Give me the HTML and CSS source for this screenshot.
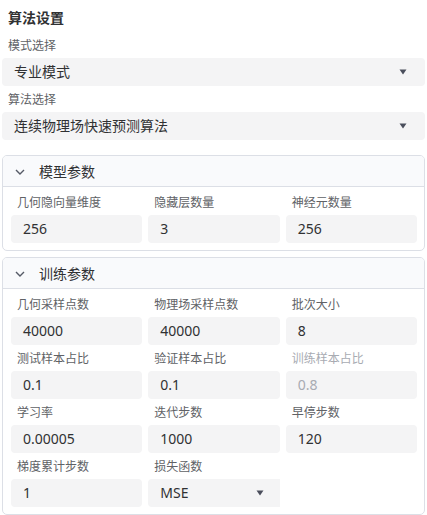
FILE: index.html
```html
<!DOCTYPE html>
<html lang="zh-CN">
<head>
<meta charset="utf-8">
<title>算法设置</title>
<link rel="stylesheet" href="styles.css">
</head>
<body>
<div class="settings">
  <div class="title">算法设置</div>

  <div class="stack">
    <div class="field">
      <div class="label">模式选择</div>
      <div class="select">
        <span>专业模式</span>
        <svg class="caret" width="8" height="6" viewBox="0 0 8 6"><path d="M0.5 0.5H7.5L4 5.5Z" fill="#4a4e5c"/></svg>
      </div>
    </div>
    <div class="field">
      <div class="label">算法选择</div>
      <div class="select">
        <span>连续物理场快速预测算法</span>
        <svg class="caret" width="8" height="6" viewBox="0 0 8 6"><path d="M0.5 0.5H7.5L4 5.5Z" fill="#4a4e5c"/></svg>
      </div>
    </div>
  </div>

  <section class="panel first">
    <div class="panel-head">
      <svg class="chev" width="10" height="6" viewBox="0 0 10 6"><path d="M1 1L5 5L9 1" fill="none" stroke="#555a66" stroke-width="1.4"/></svg>
      <span>模型参数</span>
    </div>
    <div class="panel-body">
      <div class="field"><div class="label">几何隐向量维度</div><div class="input">256</div></div>
      <div class="field"><div class="label">隐藏层数量</div><div class="input">3</div></div>
      <div class="field"><div class="label">神经元数量</div><div class="input">256</div></div>
    </div>
  </section>

  <section class="panel">
    <div class="panel-head">
      <svg class="chev" width="10" height="6" viewBox="0 0 10 6"><path d="M1 1L5 5L9 1" fill="none" stroke="#555a66" stroke-width="1.4"/></svg>
      <span>训练参数</span>
    </div>
    <div class="panel-body">
      <div class="field"><div class="label">几何采样点数</div><div class="input">40000</div></div>
      <div class="field"><div class="label">物理场采样点数</div><div class="input">40000</div></div>
      <div class="field"><div class="label">批次大小</div><div class="input">8</div></div>

      <div class="field"><div class="label">测试样本占比</div><div class="input">0.1</div></div>
      <div class="field"><div class="label">验证样本占比</div><div class="input">0.1</div></div>
      <div class="field disabled"><div class="label">训练样本占比</div><div class="input">0.8</div></div>

      <div class="field"><div class="label">学习率</div><div class="input">0.00005</div></div>
      <div class="field"><div class="label">迭代步数</div><div class="input">1000</div></div>
      <div class="field"><div class="label">早停步数</div><div class="input">120</div></div>

      <div class="field"><div class="label">梯度累计步数</div><div class="input">1</div></div>
      <div class="field">
        <div class="label">损失函数</div>
        <div class="select small">
          <span>MSE</span>
          <svg class="caret" width="8" height="6" viewBox="0 0 8 6"><path d="M0.5 0.5H7.5L4 5.5Z" fill="#4a4e5c"/></svg>
        </div>
      </div>
    </div>
  </section>
</div>
</body>
</html>
```

FILE: styles.css
```css
* {
  box-sizing: border-box;
}

html, body {
  margin: 0;
  background: #ffffff;
}

body {
  font-family: "Noto Sans", "Noto Sans CJK SC", sans-serif;
  color: #303133;
  overflow: hidden;
}

.settings {
  padding: 8px 2px 0;
}

.title {
  font-size: 14px;
  font-weight: 700;
  line-height: 20px;
  padding-left: 6px;
  margin-bottom: 8px;
  color: #303133;
}

.stack {
  display: flex;
  flex-direction: column;
  gap: 4px;
}

.field {
  display: flex;
  flex-direction: column;
  min-width: 0;
}

.label {
  font-size: 12px;
  line-height: 20px;
  height: 20px;
  margin-bottom: 2px;
  padding-left: 6px;
  color: #606266;
  white-space: nowrap;
}

.select,
.input {
  height: 28px;
  background: #f4f4f5;
  border-radius: 4px;
  font-size: 14px;
  line-height: 28px;
  padding: 0 12px;
  color: #303133;
  white-space: nowrap;
}

.select {
  display: flex;
  align-items: center;
  justify-content: space-between;
  padding-right: 18px;
}

.select.small {
  padding-right: 16px;
  border-radius: 4px 0 0 4px;
}

.caret {
  display: block;
}

.panel {
  border: 1px solid #dcdfe6;
  border-radius: 5px;
  margin-top: 6px;
  overflow: hidden;
}

.panel.first {
  margin-top: 15px;
}

.panel-head {
  height: 31px;
  display: flex;
  align-items: center;
  gap: 14px;
  padding-left: 12px;
  background: #f9fafc;
  border-bottom: 1px solid #dcdfe6;
  font-size: 14px;
  color: #303133;
}

.chev {
  display: block;
  margin-top: 1px;
}

.panel-body {
  display: grid;
  grid-template-columns: repeat(3, 1fr);
  column-gap: 6px;
  row-gap: 4px;
  padding: 6px 7px 7px 8px;
}

.disabled .label,
.disabled .input {
  color: #a8abb2;
}
```
